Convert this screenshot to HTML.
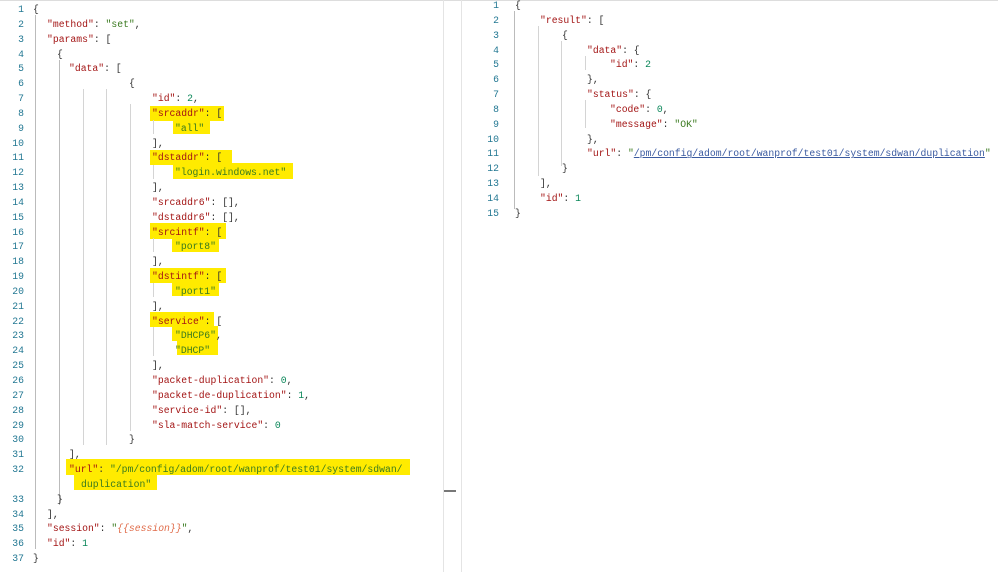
<!DOCTYPE html>
<html><head><style>
body{margin:0;width:998px;height:572px;background:#fff;position:relative;overflow:hidden;font-family:"Liberation Mono",monospace;font-size:9.75px}
.l{position:absolute;white-space:pre;line-height:14.84px;height:14.84px}
.n{position:absolute;width:24px;text-align:right;color:#237893;line-height:14.84px;white-space:pre}
.k{color:#a31515}.s{color:#3a7a1f}.d{color:#098658}.p{color:#333}.t{color:#e06c4a;font-style:italic}
.g{position:absolute;width:1px;background:#d4d4d4}
.h{position:absolute;background:#ffeb00}
.u{color:#3a5aa0;text-decoration:underline}
</style></head><body>
<div style="position:absolute;left:0;top:0;width:998px;height:1px;background:#ddd"></div>
<div style="position:absolute;left:443px;top:0;width:1px;height:572px;background:#e4e4e4"></div>
<div style="position:absolute;left:461px;top:0;width:1px;height:572px;background:#e4e4e4"></div>
<div style="position:absolute;left:444px;top:490px;width:12px;height:2px;background:#777"></div>
<!-- highlights -->
<div class="h" style="left:150px;top:106px;width:74px;height:15px"></div>
<div class="h" style="left:173px;top:120px;width:37px;height:14px"></div>
<div class="h" style="left:150px;top:150px;width:82px;height:15px"></div>
<div class="h" style="left:173px;top:163px;width:120px;height:16px"></div>
<div class="h" style="left:150px;top:223px;width:76px;height:16px"></div>
<div class="h" style="left:172px;top:237px;width:47px;height:15px"></div>
<div class="h" style="left:150px;top:268px;width:76px;height:15px"></div>
<div class="h" style="left:172px;top:282px;width:47px;height:14px"></div>
<div class="h" style="left:150px;top:312px;width:64px;height:15px"></div>
<div class="h" style="left:172px;top:326px;width:46px;height:15px"></div>
<div class="h" style="left:177px;top:341px;width:41px;height:14px"></div>
<div class="h" style="left:66px;top:459px;width:344px;height:16px"></div>
<div class="h" style="left:74px;top:474px;width:83px;height:16px"></div>
<!-- guides left -->
<div class="g" style="left:35px;top:15px;height:534px;background:#bbb"></div>
<div class="g" style="left:59px;top:60px;height:445px;background:#bbb"></div>
<div class="g" style="left:83px;top:89px;height:356px"></div>
<div class="g" style="left:106px;top:89px;height:356px"></div>
<div class="g" style="left:130px;top:104px;height:327px"></div>
<div class="g" style="left:153px;top:120px;height:14px"></div>
<div class="g" style="left:153px;top:165px;height:14px"></div>
<div class="g" style="left:153px;top:238px;height:14px"></div>
<div class="g" style="left:153px;top:283px;height:14px"></div>
<div class="g" style="left:153px;top:327px;height:29px"></div>
<!-- guides right -->
<div class="g" style="left:514px;top:11px;height:198px;background:#bbb"></div>
<div class="g" style="left:538px;top:26px;height:150px"></div>
<div class="g" style="left:561px;top:41px;height:125px"></div>
<div class="g" style="left:585px;top:56px;height:14px"></div>
<div class="g" style="left:585px;top:100px;height:28px"></div>
<div id="L"></div>
<script>
var L=[
[33,'<span class="p">{</span>'],
[47,'<span class="k">"method"</span><span class="p">: </span><span class="s">"set"</span><span class="p">,</span>'],
[47,'<span class="k">"params"</span><span class="p">: [</span>'],
[57,'<span class="p">{</span>'],
[69,'<span class="k">"data"</span><span class="p">: [</span>'],
[129,'<span class="p">{</span>'],
[152,'<span class="k">"id"</span><span class="p">: </span><span class="d">2</span><span class="p">,</span>'],
[152,'<span class="k">"srcaddr"</span><span class="p">: [</span>'],
[175,'<span class="s">"all"</span>'],
[152,'<span class="p">],</span>'],
[152,'<span class="k">"dstaddr"</span><span class="p">: [</span>'],
[175,'<span class="s">"login.windows.net"</span>'],
[152,'<span class="p">],</span>'],
[152,'<span class="k">"srcaddr6"</span><span class="p">: [],</span>'],
[152,'<span class="k">"dstaddr6"</span><span class="p">: [],</span>'],
[152,'<span class="k">"srcintf"</span><span class="p">: [</span>'],
[175,'<span class="s">"port8"</span>'],
[152,'<span class="p">],</span>'],
[152,'<span class="k">"dstintf"</span><span class="p">: [</span>'],
[175,'<span class="s">"port1"</span>'],
[152,'<span class="p">],</span>'],
[152,'<span class="k">"service"</span><span class="p">: [</span>'],
[175,'<span class="s">"DHCP6"</span><span class="p">,</span>'],
[175,'<span class="s">"DHCP"</span>'],
[152,'<span class="p">],</span>'],
[152,'<span class="k">"packet-duplication"</span><span class="p">: </span><span class="d">0</span><span class="p">,</span>'],
[152,'<span class="k">"packet-de-duplication"</span><span class="p">: </span><span class="d">1</span><span class="p">,</span>'],
[152,'<span class="k">"service-id"</span><span class="p">: [],</span>'],
[152,'<span class="k">"sla-match-service"</span><span class="p">: </span><span class="d">0</span>'],
[129,'<span class="p">}</span>'],
[69,'<span class="p">],</span>'],
[69,'<span class="k">"url"</span><span class="p">: </span><span class="s">"/pm/config/adom/root/wanprof/test01/system/sdwan/</span>'],
[81,'<span class="s">duplication"</span>',1],
[57,'<span class="p">}</span>'],
[47,'<span class="p">],</span>'],
[47,'<span class="k">"session"</span><span class="p">: </span><span class="s">"</span><span class="t">{{session}}</span><span class="s">"</span><span class="p">,</span>'],
[47,'<span class="k">"id"</span><span class="p">: </span><span class="d">1</span>'],
[33,'<span class="p">}</span>']];
var R=[
[515,'<span class="p">{</span>'],
[540,'<span class="k">"result"</span><span class="p">: [</span>'],
[562,'<span class="p">{</span>'],
[587,'<span class="k">"data"</span><span class="p">: {</span>'],
[610,'<span class="k">"id"</span><span class="p">: </span><span class="d">2</span>'],
[587,'<span class="p">},</span>'],
[587,'<span class="k">"status"</span><span class="p">: {</span>'],
[610,'<span class="k">"code"</span><span class="p">: </span><span class="d">0</span><span class="p">,</span>'],
[610,'<span class="k">"message"</span><span class="p">: </span><span class="s">"OK"</span>'],
[587,'<span class="p">},</span>'],
[587,'<span class="k">"url"</span><span class="p">: </span><span class="s">"</span><span class="u">/pm/config/adom/root/wanprof/test01/system/sdwan/duplication</span><span class="s">"</span>'],
[562,'<span class="p">}</span>'],
[540,'<span class="p">],</span>'],
[540,'<span class="k">"id"</span><span class="p">: </span><span class="d">1</span>'],
[515,'<span class="p">}</span>']];
var h='',n=1;
L.forEach(function(r,i){var y=3+i*14.84;if(!r[2]){h+='<div class="n" style="left:0;top:'+y+'px">'+n+'</div>';n++;}h+='<div class="l" style="left:'+r[0]+'px;top:'+y+'px">'+r[1]+'</div>';});
R.forEach(function(r,i){var y=-1+i*14.84;h+='<div class="n" style="left:475px;top:'+y+'px">'+(i+1)+'</div><div class="l" style="left:'+r[0]+'px;top:'+y+'px">'+r[1]+'</div>';});
document.getElementById('L').innerHTML=h;
</script>
</body></html>
